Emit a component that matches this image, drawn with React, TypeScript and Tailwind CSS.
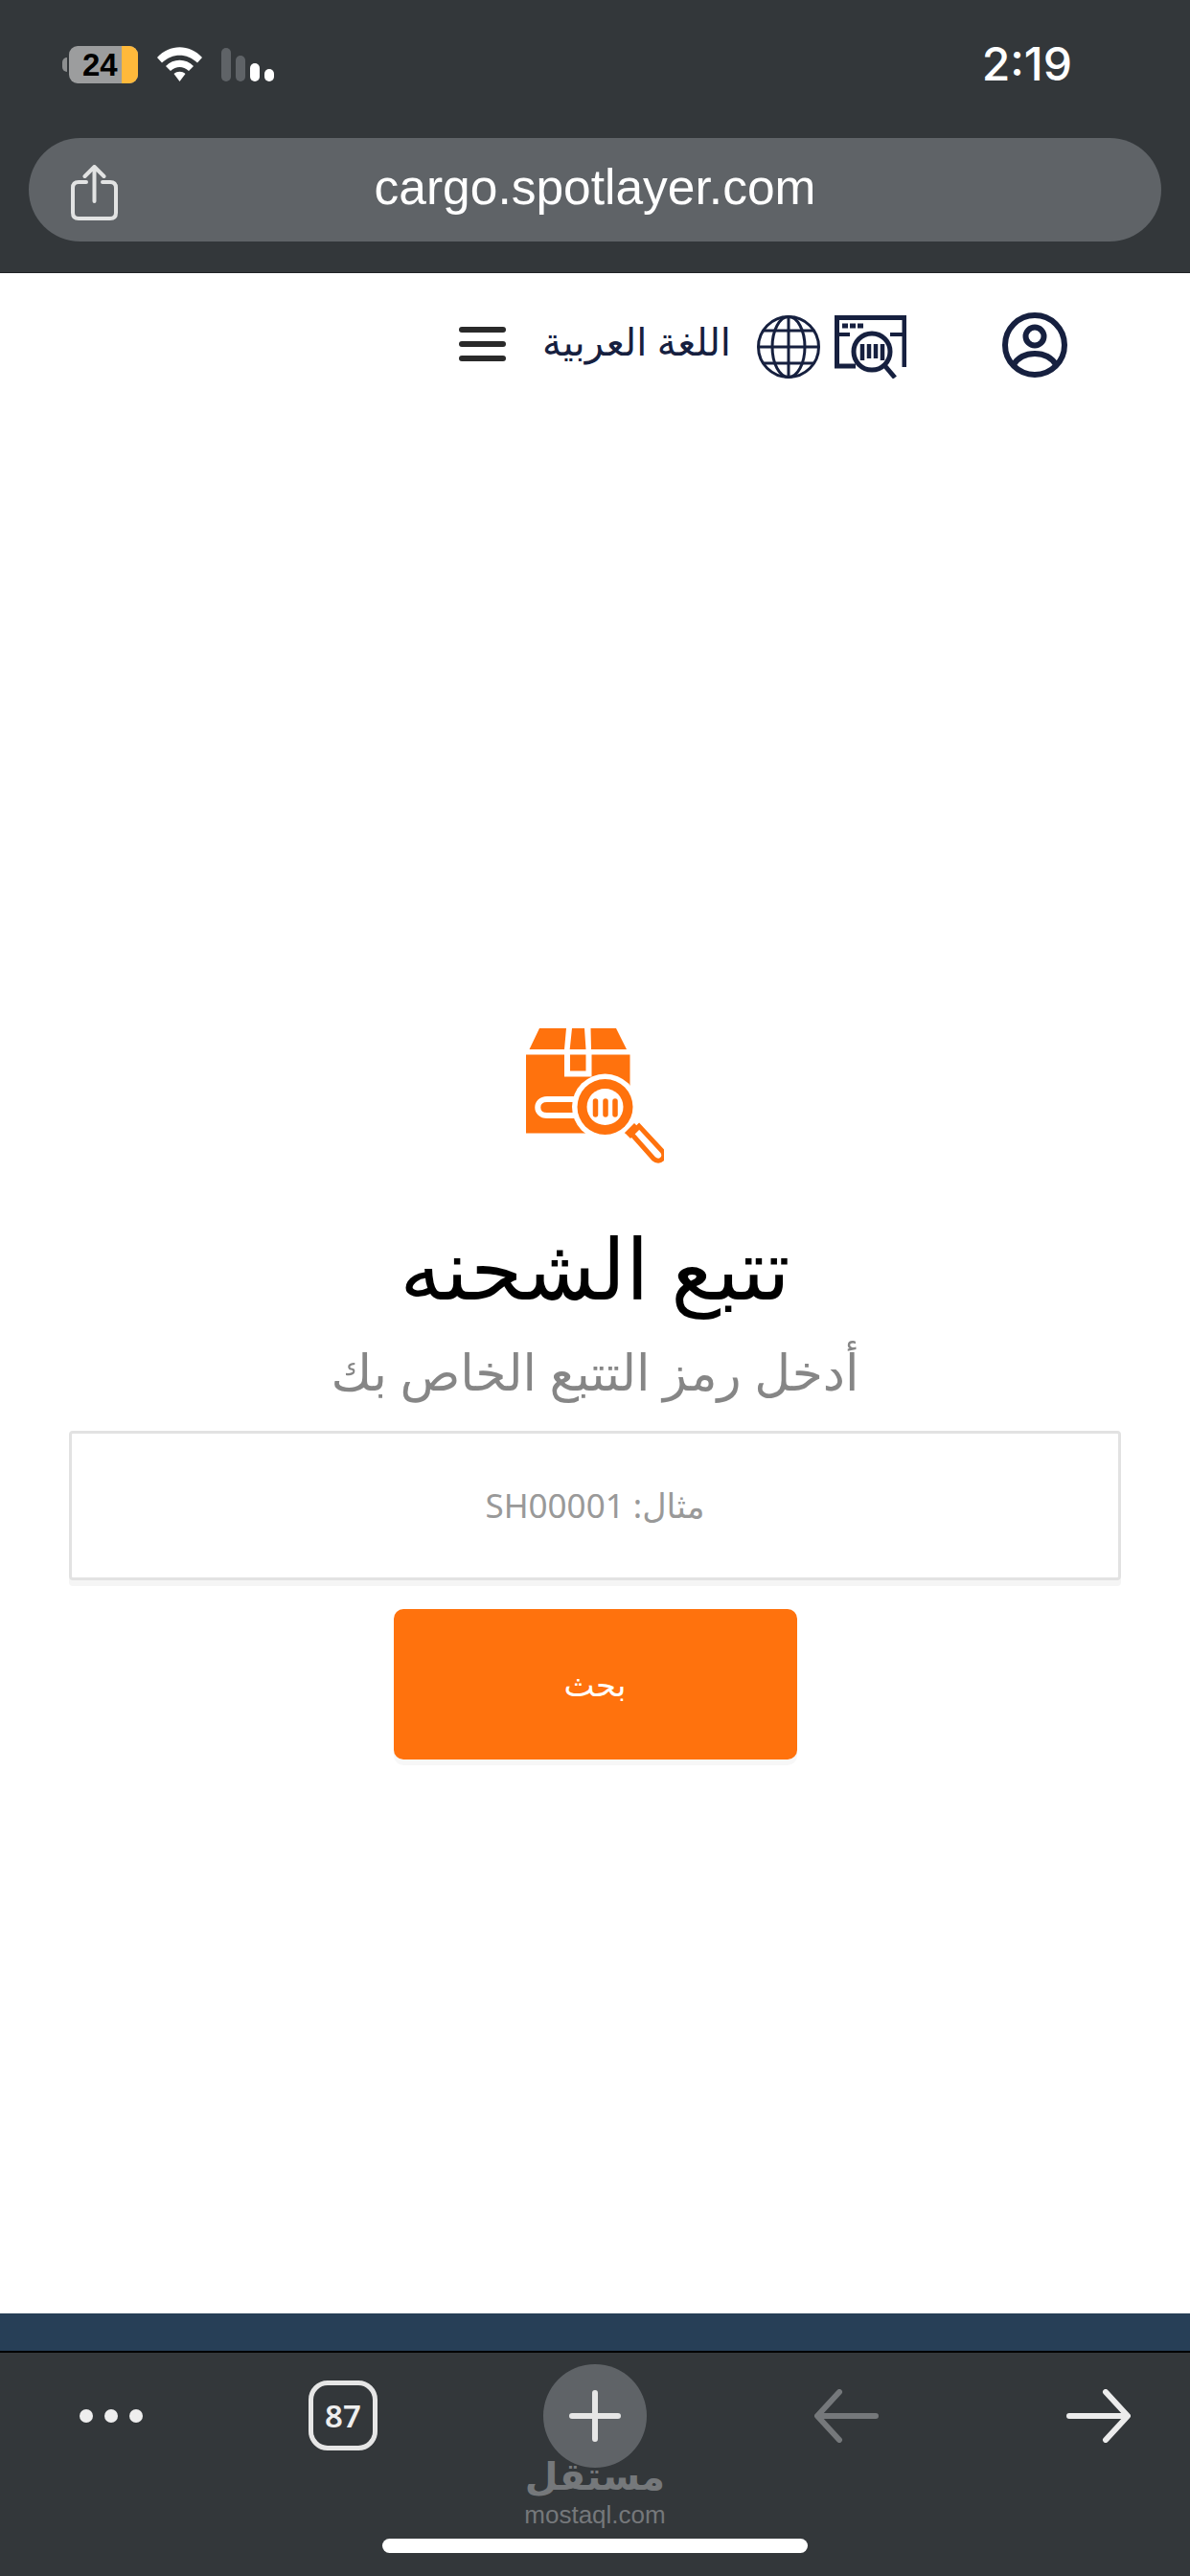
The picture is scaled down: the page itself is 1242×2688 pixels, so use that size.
const sans = { fontFamily: '"Noto Sans", "DejaVu Sans", sans-serif' };

const WifiIcon = () => (
  <svg width="47" height="36" viewBox="0 0 47 36" fill="#fff">
    <path d="M0 11 C13 -3.500 34 -3.500 47 11 L42 16.500 C31 6 16 6 5 16.500 Z" />
    <path d="M9 20 C17 11.500 30 11.500 38 20 L33 25 C27 19.500 20 19.500 14 25 Z" />
    <path d="M17.500 28 C21 25 26 25 29.500 28 L23.500 36 Z" />
  </svg>
);

const ShareIcon = () => (
  <svg width="49" height="58" viewBox="0 0 49 58" fill="none" stroke="#e2e3e3" strokeWidth="4" strokeLinecap="round" strokeLinejoin="round">
    <path d="M16 18 H8 Q2 18 2 24 V50 Q2 56 8 56 H41 Q47 56 47 50 V24 Q47 18 41 18 H33" />
    <path d="M24.500 38 V3 M14.500 12 L24.500 2 L34.500 12" />
  </svg>
);

const GlobeIcon = () => (
  <svg width="66" height="66" viewBox="0 0 66 66" fill="none" stroke="#16203f" strokeWidth="3">
    <circle cx="33" cy="33" r="31.500" />
    <ellipse cx="33" cy="33" rx="17" ry="31.500" />
    <path d="M33 1.500 V64.500 M1.500 33 H64.500 M7 16 H59 M7 50 H59" />
  </svg>
);

const BarcodeSearchIcon = () => (
  <svg width="75" height="66" viewBox="0 0 75 66" fill="none" stroke="#16203f">
    <path d="M22 53 H2.500 V2.500 H73 V54" strokeWidth="5" />
    <path d="M3 20 H16 M58 20 H73" strokeWidth="4" />
    <path d="M8 11 H14 M16 11 H22 M24 11 H30" strokeWidth="5" />
    <circle cx="39" cy="38" r="19" strokeWidth="5" />
    <path d="M52 52 L63 65" strokeWidth="5" />
    <path d="M29 30 V47 M36 30 V45 M43 30 V45 M50 30 V47" strokeWidth="4.500" />
  </svg>
);

const ProfileIcon = () => (
  <svg width="68" height="68" viewBox="0 0 68 68" fill="none" stroke="#16203f" strokeWidth="6">
    <circle cx="34" cy="34" r="31" />
    <circle cx="34" cy="25" r="9.500" />
    <path d="M11.500 55 C17 46 24 43 34 43 C44 43 51 46 56.500 55" />
  </svg>
);

const BoxSearchIcon = () => (
  <svg width="144" height="144" viewBox="0 0 144 144">
    {/* lid */}
    <path fill="#ff720d" d="M14 0 H42 L40 22 H3.500 Z M48 0 H61 L62.500 22 H45.700 Z M67.500 0 H94 L105 22 H68 Z" />
    {/* body with tape notch */}
    <path fill="#ff720d" d="M0 27.500 H108.500 V109.500 H0 Z" />
    <path fill="none" stroke="#fff" strokeWidth="6" d="M43 27 V47.500 H65.500 V27" />
    {/* label pill */}
    <path fill="none" stroke="#fff" strokeWidth="6" d="M60 74 H22 C9 74 9 91 22 91 H60" />
    {/* magnifier */}
    <circle cx="82.500" cy="82" r="34.500" fill="#fff" />
    <circle cx="82.500" cy="82" r="29" fill="#ff720d" />
    <circle cx="82.500" cy="82" r="19" fill="#fff" />
    <path stroke="#ff720d" strokeWidth="5.500" strokeLinecap="round" d="M72.500 76 V90 M83 76 V90 M93 76 V90" />
    <path fill="#ff720d" d="M103 109 L113 99 L119 105 L109 115 Z" />
    <path fill="none" stroke="#ff720d" strokeWidth="5" d="M110 110 L118 102 L142 128 C147 134 140 142 133 136 Z" />
  </svg>
);

export default function App() {
  return (
    <div className="flex h-[2688px] w-[1242px] flex-col overflow-hidden bg-white" style={sans}>
      {/* Browser top bar */}
      <div className="h-[285px] shrink-0 border-b border-[#202225] bg-[#33373a] px-[30px]">
        <div className="flex h-[144px] items-start justify-between">
          <div className="ml-[35px] flex items-start pt-[48px]">
            <div className="mt-[12px] h-[15px] w-[5px] rounded-l-full bg-[#8d8f90]" />
            <div className="ml-[2px] flex h-[39px] w-[72px] overflow-hidden rounded-[9px] bg-[#9c9d9e]">
              <span className="w-[55px] pl-[14px] text-[33px] leading-[39px] font-bold text-black" style={{ fontFamily: '"Liberation Sans", sans-serif' }}>24</span>
              <span className="w-[17px] bg-[#ffb93b]" />
            </div>
            <div className="ml-[20px] mt-[1px]"><WifiIcon /></div>
            <div className="ml-[20px] mt-[2px] flex h-[35px] items-end gap-[5px]">
              <span className="h-[35px] w-[10px] rounded-full bg-[#5f6367]" />
              <span className="h-[27px] w-[10px] rounded-full bg-[#5f6367]" />
              <span className="h-[19px] w-[10px] rounded-full bg-white" />
              <span className="h-[13px] w-[10px] rounded-full bg-white" />
            </div>
          </div>
          <span className="mr-[93px] mt-[38px] text-[48px] leading-[58px] font-medium text-white" style={{ fontFamily: 'Inter, sans-serif' }}>2:19</span>
        </div>
        <div className="relative flex h-[108px] items-center justify-center rounded-[54px] bg-[#5f6367]">
          <div className="absolute left-[44px] top-[28px]"><ShareIcon /></div>
          <span className="mb-[6px] text-[51.500px] leading-[60px] text-white" style={{ fontFamily: '"Liberation Sans", sans-serif' }}>cargo.spotlayer.com</span>
        </div>
      </div>

      {/* Site header */}
      <header className="flex h-[110px] shrink-0 items-end pl-[479px]">
        <div className="mb-[18px] flex w-[49px] flex-col gap-[9px] self-end">
          <span className="h-[6px] rounded-full bg-[#2a2a2a]" />
          <span className="h-[6px] rounded-full bg-[#2a2a2a]" />
          <span className="h-[6px] rounded-full bg-[#2a2a2a]" />
        </div>
        <span className="mb-[15px] ml-[41px] w-[194px] whitespace-nowrap text-center text-[40px] leading-[48px] text-[#16203f]" dir="rtl">اللغة العربية</span>
        <div className="ml-[27px] flex gap-[15px]">
          <GlobeIcon />
          <BarcodeSearchIcon />
        </div>
        <div className="mb-[1px] ml-[100px]"><ProfileIcon /></div>
      </header>

      {/* Tracking form */}
      <main className="flex flex-1 flex-col items-center pt-[678px]">
        <BoxSearchIcon />
        <h1 className="mt-[45px] text-[88px] leading-[120px] font-normal text-black" dir="rtl">تتبع الشحنه</h1>
        <p className="mt-[12px] text-[52px] leading-[74px] text-[#868686]" dir="rtl">أدخل رمز التتبع الخاص بك</p>
        <div className="mt-[25px] flex h-[156px] w-[1098px] items-center justify-center rounded-[4px] border-[3px] border-[#e2e2e2] shadow-[0_6px_0_#f5f5f5]">
          <span className="text-[35px] text-[#999999]" dir="rtl">مثال: SH00001</span>
        </div>
        <button className="mt-[30px] h-[157px] w-[421px] rounded-[10px] bg-[#ff720d] text-[34px] text-white shadow-[0_6px_0_#f7f7f7]" dir="rtl">بحث</button>
      </main>

      <div className="h-[39px] shrink-0 bg-[#273f57]" />

      {/* Browser bottom bar */}
      <div className="relative h-[235px] shrink-0 border-t-2 border-black bg-[#33373a]">
        <div className="flex h-[131px] items-center pl-[83px]">
          <div className="flex gap-[12px]">
            <span className="size-[14px] rounded-full bg-[#eeeeee]" />
            <span className="size-[14px] rounded-full bg-[#eeeeee]" />
            <span className="size-[14px] rounded-full bg-[#eeeeee]" />
          </div>
          <div className="ml-[173px] flex h-[73px] w-[72px] items-center justify-center rounded-[20px] border-[5px] border-[#e6e6e6] text-[33px] font-semibold text-[#eeeeee]">87</div>
          <div className="ml-[173px] flex size-[108px] items-center justify-center rounded-full bg-[#5f6367]">
            <svg width="54" height="54" viewBox="0 0 54 54" stroke="#e6e6e6" strokeWidth="6" strokeLinecap="round">
              <path d="M27 3 V51 M3 27 H51" />
            </svg>
          </div>
          <svg className="ml-[175px]" width="67" height="56" viewBox="0 0 67 56" fill="none" stroke="#75787b" strokeWidth="6" strokeLinecap="round" strokeLinejoin="round">
            <path d="M64 28 H4 M26 3 L3 28 L26 53" />
          </svg>
          <svg className="ml-[196px]" width="67" height="56" viewBox="0 0 67 56" fill="none" stroke="#ececec" strokeWidth="6" strokeLinecap="round" strokeLinejoin="round">
            <path d="M3 28 H63 M41 3 L64 28 L41 53" />
          </svg>
        </div>

        {/* Watermark */}
        <div className="absolute left-[545px] top-[100px] flex w-[152px] flex-col items-center text-[#75787b]">
          <span className="text-[40px] leading-[56px] font-bold" dir="rtl">مستقل</span>
          <span className="text-[26px] leading-[26px] font-medium" style={{ fontFamily: '"Liberation Sans", sans-serif' }}>mostaql.com</span>
        </div>

        <div className="absolute bottom-[24px] left-[399px] h-[15px] w-[444px] rounded-full bg-white" />
      </div>
    </div>
  );
}
